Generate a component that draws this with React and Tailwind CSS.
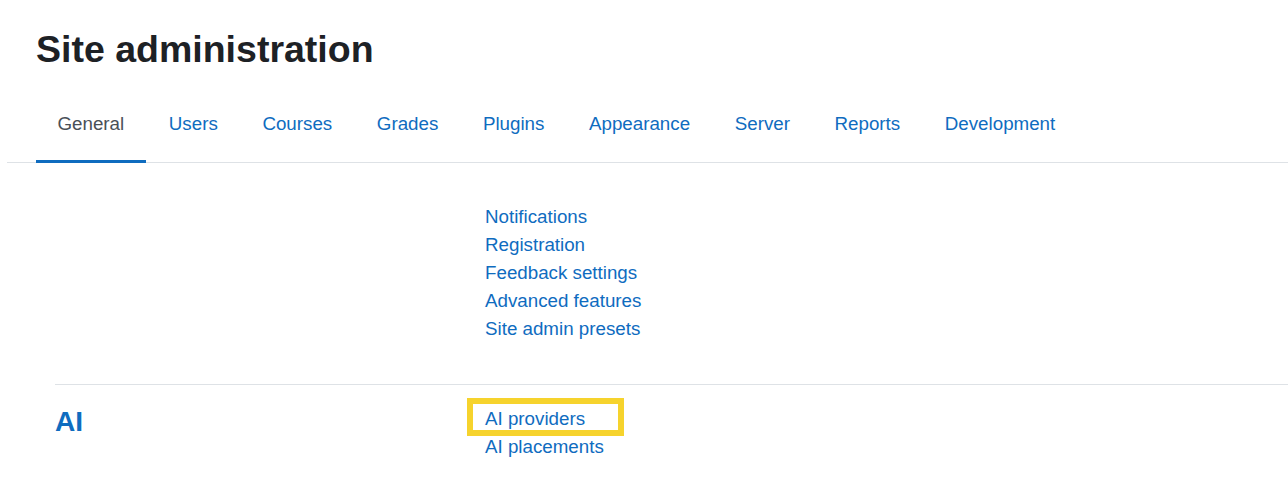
import React from 'react';

const tabs = ['General', 'Users', 'Courses', 'Grades', 'Plugins', 'Appearance', 'Server', 'Reports', 'Development'];

const generalLinks = ['Notifications', 'Registration', 'Feedback settings', 'Advanced features', 'Site admin presets'];

const App = () => {
  return (
    <div className="min-h-screen bg-white font-['Liberation_Sans',Arial,sans-serif] text-[18.75px] text-[#1d2125] overflow-hidden">
      <h2 className="pl-[36px] pt-[27px] text-[37.5px] font-bold leading-[1.2]">Site administration</h2>

      {/* Tabs */}
      <nav className="ml-[7px] mt-[16px] border-b border-[#dee2e6]">
        <ul className="flex gap-[1.6px] pl-[29px]">
          {tabs.map((t, idx) => (
            <li key={t} className="-mb-px">
              <a
                href="#"
                className={
                  idx === 0
                    ? 'block px-[21.5px] pt-[22px] pb-[22px] leading-[28px] border-b-[3px] border-[#0f6cbf] text-[#495057]'
                    : 'block px-[21.5px] pt-[22px] pb-[22px] leading-[28px] border-b-[3px] border-transparent text-[#0f6cbf]'
                }
              >
                {t}
              </a>
            </li>
          ))}
        </ul>
      </nav>

      <div className="pl-[55px]">
        {/* General section */}
        <div className="grid grid-cols-[430px_1fr] pt-[39.5px] pb-[41px]">
          <div />
          <ul className="leading-[1.5]">
            {generalLinks.map((l) => (
              <li key={l}>
                <a href="#" className="text-[#0f6cbf]">{l}</a>
              </li>
            ))}
          </ul>
        </div>

        {/* AI section */}
        <div className="grid grid-cols-[430px_1fr] border-t border-[#dee2e6] pt-[19.5px] pb-6">
          <h3 className="text-[28.125px] font-bold leading-[1.2] text-[#0f6cbf]">AI</h3>
          <ul className="leading-[1.5]">
            <li>
              <a href="#" className="relative text-[#0f6cbf]">
                AI providers
                <span className="absolute left-[-18px] top-[-10px] w-[157px] h-[38px] border-[6px] border-[#f6d32d]" />
              </a>
            </li>
            <li>
              <a href="#" className="text-[#0f6cbf]">AI placements</a>
            </li>
          </ul>
        </div>
      </div>
    </div>
  );
};

export default App;
